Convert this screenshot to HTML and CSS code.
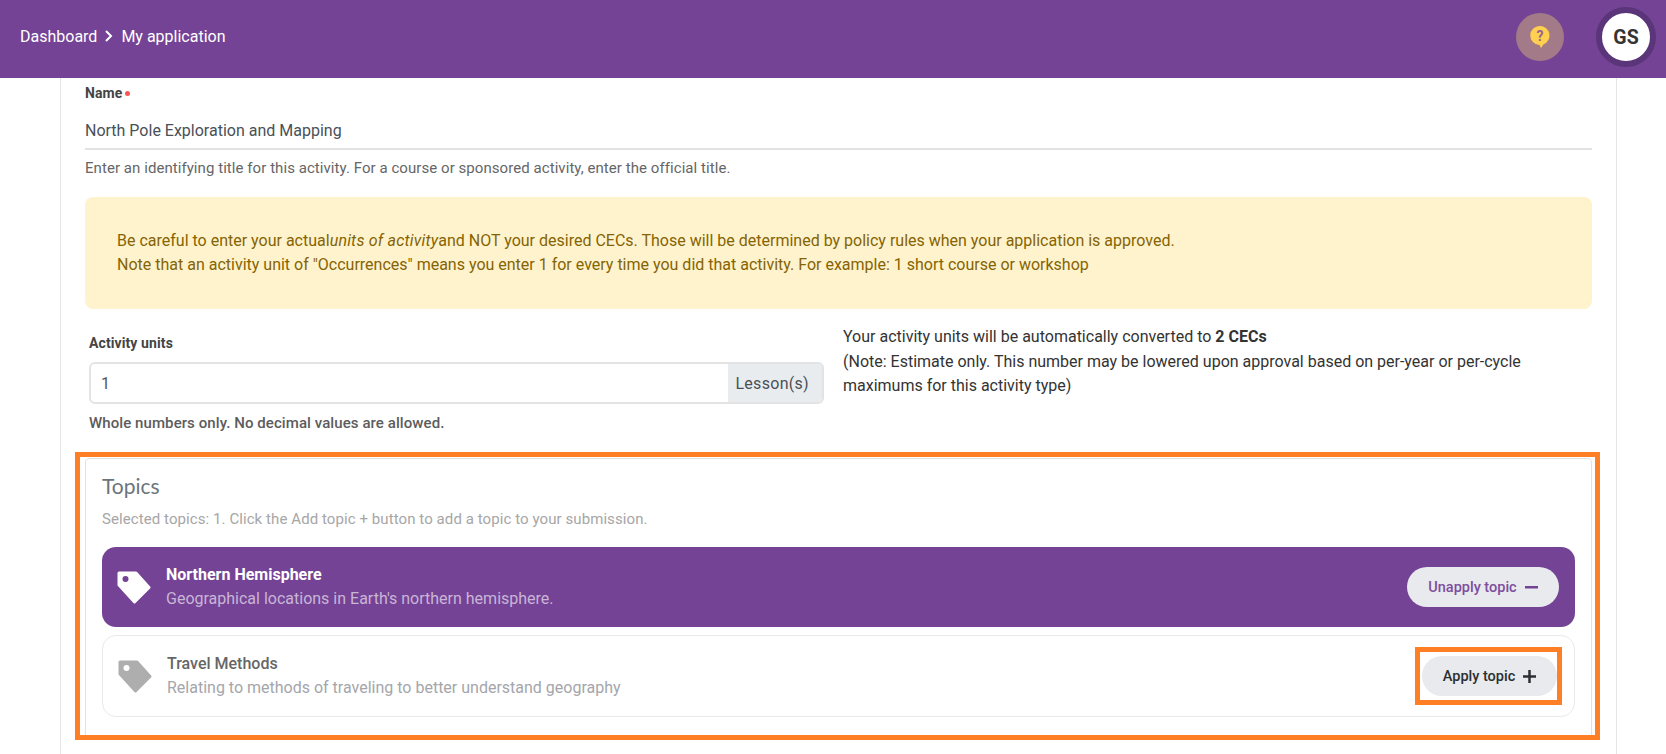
FILE: index.html
```html
<!DOCTYPE html>
<html lang="en">
<head>
<meta charset="utf-8">
<title>My application</title>
<link rel="stylesheet" href="styles.css">
</head>
<body>
<header class="topbar">
  <nav class="crumbs">
    <span>Dashboard</span>
    <svg class="crumb-sep" width="10" height="14" viewBox="0 0 10 14"><path d="M2 2l5 5-5 5" fill="none" stroke="#fff" stroke-width="2"/></svg>
    <span>My application</span>
  </nav>
  <div class="help">
    <svg width="22" height="26" viewBox="0 0 22 26"><path d="M11 1a9.500 9.500 0 0 1 3.600 18.300L12 23l-1.500-3A9.500 9.500 0 0 1 11 1z" fill="#ffd04f"/><text x="11" y="16" text-anchor="middle" class="help-q">?</text></svg>
  </div>
  <div class="avatar">GS</div>
</header>
<main class="panel">
  <div class="label">Name<span class="req"></span></div>
  <div class="name-input">North Pole Exploration and Mapping</div>
  <p class="hint">Enter an identifying title for this activity. For a course or sponsored activity, enter the official title.</p>
  <div class="alert">
    <p>Be careful to enter your actual<em>units of activity</em>and NOT your desired CECs. Those will be determined by policy rules when your application is approved.</p>
    <p>Note that an activity unit of "Occurrences" means you enter 1 for every time you did that activity. For example: 1 short course or workshop</p>
  </div>
  <section class="units">
    <div class="units-left">
      <div class="label">Activity units</div>
      <div class="group"><span class="group-val">1</span><span class="group-add">Lesson(s)</span></div>
      <div class="units-hint">Whole numbers only. No decimal values are allowed.</div>
    </div>
    <div class="units-right">
      <p>Your activity units will be automatically converted to <strong>2 CECs</strong></p>
      <p>(Note: Estimate only. This number may be lowered upon approval based on per-year or per-cycle maximums for this activity type)</p>
    </div>
  </section>
  <section class="topics">
    <div class="topics-mark"></div>
    <h2>Topics</h2>
    <p class="topics-sub">Selected topics: 1. Click the Add topic + button to add a topic to your submission.</p>
    <div class="topic topic-on">
      <svg class="tag" width="34" height="33" viewBox="0 0 34 33"><path d="M2 2H19L32 16.500 17.500 31 2 14z" fill="#fff" stroke="#fff" stroke-width="3" stroke-linejoin="round"/><circle cx="8.500" cy="8" r="3" fill="#744395"/></svg>
      <div class="topic-text">
        <div class="topic-title">Northern Hemisphere</div>
        <div class="topic-desc">Geographical locations in Earth's northern hemisphere.</div>
      </div>
      <button class="btn btn-un">Unapply topic<svg width="13" height="3" viewBox="0 0 13 3"><rect width="13" height="2.500" fill="#744395"/></svg></button>
    </div>
    <div class="topic topic-off">
      <svg class="tag" width="34" height="33" viewBox="0 0 34 33"><path d="M2 2H19L32 16.500 17.500 31 2 14z" fill="#aeaeae" stroke="#aeaeae" stroke-width="3" stroke-linejoin="round"/><circle cx="8.500" cy="8" r="3" fill="#fff"/></svg>
      <div class="topic-text">
        <div class="topic-title">Travel Methods</div>
        <div class="topic-desc">Relating to methods of traveling to better understand geography</div>
      </div>
      <button class="btn btn-ap">Apply topic<svg width="13" height="13" viewBox="0 0 13 13"><path d="M6.500 0v13M0 6.500h13" stroke="#2b2f33" stroke-width="2.500"/></svg><span class="btn-mark"></span></button>
    </div>
  </section>
</main>
</body>
</html>
```
FILE: styles.css
```css
* { box-sizing: border-box; }
html, body { margin: 0; height: 100%; }
body {
  height: 754px;
  overflow: hidden;
  background: #fff;
  font-family: Roboto, "Liberation Sans", sans-serif;
  color: #495057;
}
p { margin: 0; }

.topbar {
  height: 78px;
  background: #744395;
  display: flex;
  align-items: center;
  padding: 0 10px 0 20px;
  color: #fff;
  font-size: 16px;
}
.crumbs { display: flex; align-items: center; gap: 7px; margin-right: auto; position: relative; top: -3px; }
.crumb-sep { display: block; }
.help {
  width: 48px;
  height: 48px;
  border-radius: 50%;
  background: #a37a88;
  display: flex;
  align-items: center;
  justify-content: center;
  margin-right: 32px;
  position: relative;
  top: -2px;
}
.help svg { display: block; position: relative; top: 1px; }
.help-q { font: 700 14px Roboto, sans-serif; fill: #96668f; }
.avatar {
  width: 60px;
  height: 60px;
  border-radius: 50%;
  background: #fff;
  border: 6px solid #5a3579;
  color: #343434;
  font-weight: 700;
  font-size: 19.500px;
  display: flex;
  align-items: center;
  justify-content: center;
  position: relative;
  top: -2px;
}

.panel {
  margin: 0 49px 0 60px;
  height: 676px;
  border-left: 1px solid #e5e5e5;
  border-right: 1px solid #e5e5e5;
  padding: 6px 24px 0 24px;
}
.label { font-size: 14px; font-weight: 700; line-height: 18px; color: #444; letter-spacing: 0.1px; }
.req {
  display: inline-block;
  width: 5px;
  height: 5px;
  margin-left: 3px;
  background: #f55;
  border-radius: 50%;
  vertical-align: 2px;
}
.name-input {
  height: 48px;
  padding-top: 11px;
  line-height: 36px;
  font-size: 16px;
  border-bottom: 2px solid #e2e2e2;
}
.hint { font-size: 15px; letter-spacing: 0.06px; line-height: 20px; margin-top: 8px; color: #666; }
.alert {
  margin-top: 19px;
  height: 112px;
  padding: 32px 32px 0 32px;
  background: #fff3cd;
  border-radius: 8px;
  color: #856404;
  font-size: 16px;
  line-height: 24px;
}
.alert em { letter-spacing: 0.2px; }
.units {
  display: grid;
  grid-template-columns: 735px 1fr;
  column-gap: 19px;
  padding: 25px 0 0 4px;
}
.group {
  display: flex;
  height: 42px;
  margin-top: 10px;
  border: 2px solid #e3e3e3;
  border-radius: 6px;
  overflow: hidden;
  font-size: 16px;
  line-height: 39px;
}
.group-val { flex: 1; padding-left: 10px; color: #555; }
.group-add { background: #e9ecef; padding: 0 13px 0 7px; letter-spacing: 0.3px; }
.units-hint { margin-top: 9px; font-size: 15px; letter-spacing: 0.08px; line-height: 20px; font-weight: 500; color: #5c5c5c; }
.units-right { font-size: 16px; line-height: 24.500px; color: #333; margin-top: -9px; }
.topics {
  position: relative;
  margin-top: 25px;
  height: 282px;
  border: 1px solid #e2e2e2;
  border-radius: 4px;
  padding: 13px 16px 0 16px;
}
.topics-mark {
  position: absolute;
  left: -11px;
  top: -7px;
  width: 1525px;
  height: 288px;
  border: 5px solid #ff7f27;
  pointer-events: none;
}
.topics h2 { margin: 0; font-family: Lato, Roboto, sans-serif; font-size: 21px; font-weight: 400; line-height: 28px; color: #6c757d; }
.topics-sub { margin-top: 9px; font-size: 15px; letter-spacing: 0.08px; line-height: 20px; color: #a6a6a6; }
.topic {
  display: flex;
  align-items: center;
  border-radius: 14px;
}
.topic-on { margin-top: 18px; height: 80px; background: #744395; padding: 0 16px 0 15px; }
.topic-off { margin-top: 8px; height: 82px; border: 1px solid #e9e9e9; padding: 0 17px 0 15px; }
.tag { display: block; flex: none; }
.topic-text { flex: 1; margin-left: 15px; }
.topic-title { font-size: 16px; font-weight: 700; line-height: 24px; }
.topic-desc { font-size: 16px; line-height: 24px; }
.topic-on .topic-title { color: #fff; }
.topic-on .topic-desc { color: #c9b5d6; }
.topic-off .topic-title { color: #666; font-weight: 500; }
.topic-off .topic-desc { color: #a4a6ab; }
.btn {
  position: relative;
  display: flex;
  align-items: center;
  justify-content: center;
  gap: 8px;
  height: 40px;
  border: 0;
  border-radius: 20px;
  background: #e8eaed;
  font-family: inherit;
  font-size: 14.500px;
  font-weight: 500;
  padding: 0;
}
.btn-un { width: 152px; color: #7d4e9e; }
.btn-ap { width: 135px; color: #2b2f33; }
.btn-mark {
  position: absolute;
  left: -7px;
  top: -9px;
  width: 147px;
  height: 58px;
  border: 5px solid #ff7f27;
}
```
